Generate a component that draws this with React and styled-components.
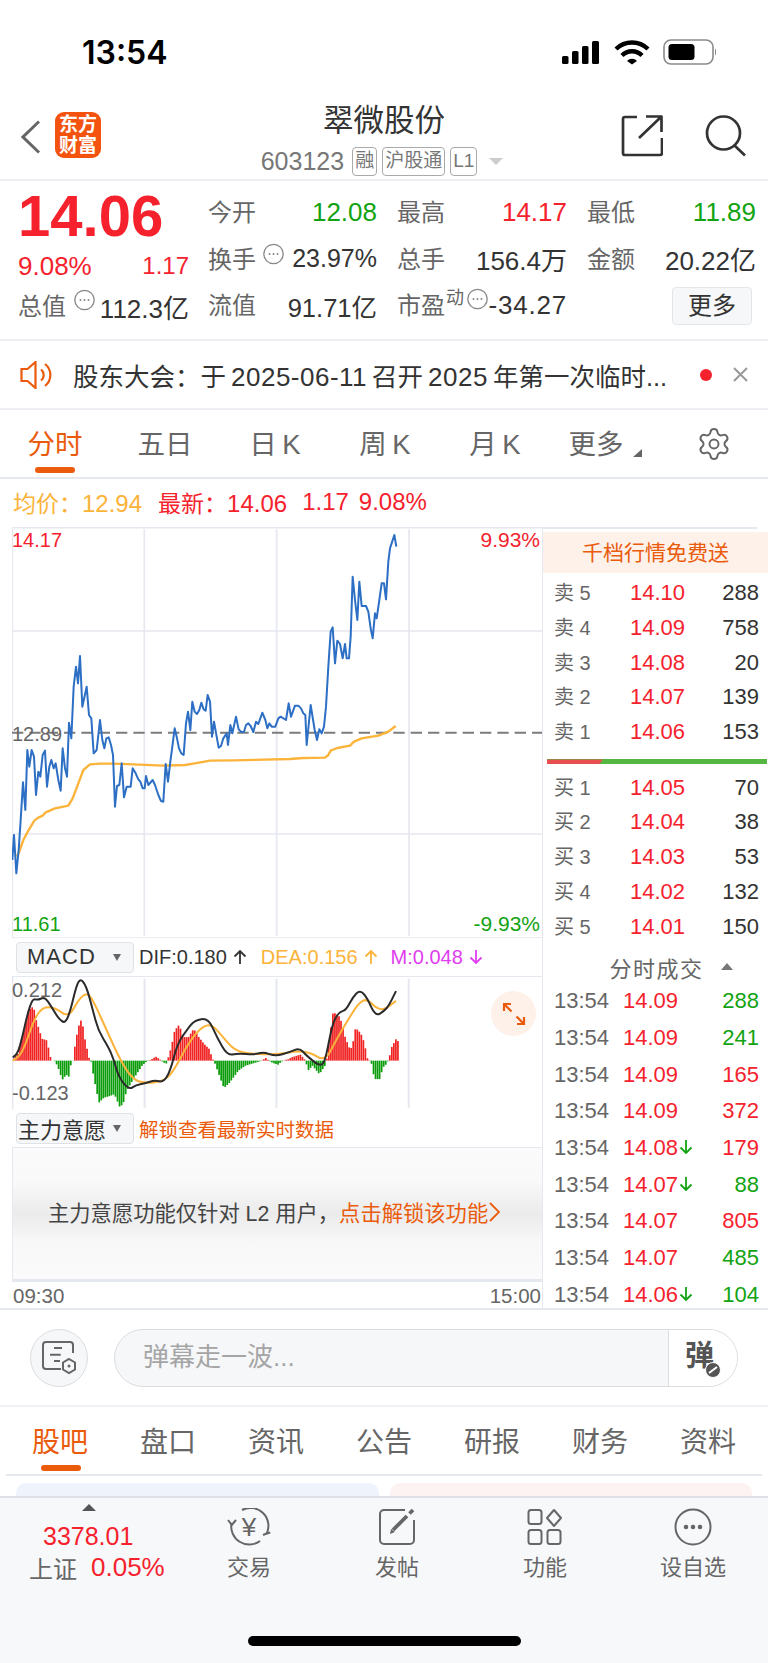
import React from "react";
import styled, { createGlobalStyle } from "styled-components";
import { Settings } from "lucide-react";

const RED = "#f5222d";
const GREEN = "#12a312";
const ORANGE = "#ea5b0c";
const AMBER = "#fbb33a";
const LINE = "#e6e8ef";
const FONT = `"Liberation Sans", "Noto Sans CJK SC", sans-serif`;

const GlobalStyle = createGlobalStyle`
  html, body { margin: 0; padding: 0; background: #fff; }
  body { font-family: ${FONT}; color: #333; }
  * { box-sizing: border-box; }
`;

const Page = styled.div`
  width: 768px;
  height: 1663px;
  overflow: hidden;
  display: flex;
  flex-direction: column;
  background: #fff;
`;

/* status bar */
const StatusBar = styled.div`
  height: 100px;
  flex: none;
  display: flex;
  justify-content: space-between;
  padding: 33px 52px 0 82px;
`;
const Clock = styled.div`
  font-family: Inter, sans-serif;
  font-weight: 600;
  font-size: 32px;
  line-height: 40px;
  color: #000;
`;
const StatusIcons = styled.svg`
  margin-top: 5px;
`;

/* nav */
const Nav = styled.div`
  height: 81px;
  flex: none;
  display: grid;
  grid-template-columns: 1fr auto 1fr;
  border-bottom: 2px solid #eeeff2;
`;
const NavLeft = styled.div`
  display: flex;
  align-items: flex-start;
  padding: 12px 0 0 21px;
  gap: 14px;
`;
const BackIcon = styled.svg`
  margin-top: 8px;
`;
const Logo = styled.div`
  width: 46px;
  height: 46px;
  border-radius: 9px;
  background: #f4530f;
  color: #fff;
  font-weight: 700;
  font-size: 19px;
  line-height: 21px;
  text-align: center;
  padding-top: 2px;
`;
const NavCenter = styled.div`
  display: flex;
  flex-direction: column;
  align-items: center;
`;
const Title = styled.div`
  font-size: 30.5px;
  line-height: 40px;
  color: #333;
`;
const SubRow = styled.div`
  display: flex;
  align-items: center;
  height: 30px;
  margin-top: 6px;
  padding-right: 4px;
  font-size: 25px;
  color: #777;
`;
const Code = styled.span`
  margin-right: 8px;
`;
const Chip = styled.span`
  height: 29px;
  padding: 0 2px;
  margin-right: 5px;
  border: 1px solid #aaa;
  border-radius: 4px;
  font-size: 19px;
  line-height: 26px;
  color: #777;
`;
const Caret = styled.span`
  width: 0;
  height: 0;
  border-left: ${(p) => p.$w}px solid transparent;
  border-right: ${(p) => p.$w}px solid transparent;
  border-${(p) => (p.$up ? "bottom" : "top")}: ${(p) => p.$h}px solid ${(p) => p.$color};
  margin-left: ${(p) => p.$ml || 0}px;
  flex: none;
`;
const NavRight = styled.div`
  display: flex;
  justify-content: flex-end;
  align-items: flex-start;
  padding: 15px 22px 0 0;
  gap: 42px;
`;

/* quote */
const Quote = styled.div`
  height: 160px;
  flex: none;
  display: flex;
  padding: 8px 13px 0 18px;
  border-bottom: 2px solid #eeeff2;
`;
const QuoteLeft = styled.div`
  width: 171px;
  margin-right: 19px;
  flex: none;
  margin-top: -3px;
`;
const BigPrice = styled.div`
  font-size: 58px;
  line-height: 60px;
  font-weight: 700;
  color: ${RED};
`;
const Change = styled.div`
  height: 40px;
  display: flex;
  align-items: center;
  justify-content: space-between;
  color: ${RED};
`;
const ChangeNum = styled.span`
  font-size: ${(p) => p.$size}px;
`;
const StatGrid = styled.div`
  flex: 1;
  display: grid;
  grid-template-columns: 169px 170px 169px;
  grid-auto-rows: 46.5px;
  column-gap: 20px;
  align-items: center;
`;
const Stat = styled.div`
  display: flex;
  justify-content: space-between;
  align-items: center;
  height: 40px;
`;
const Label = styled.span`
  font-size: 24px;
  color: #666;
  display: inline-flex;
  align-items: center;
  margin-top: -3px;
`;
const Value = styled.span`
  font-size: ${(p) => p.$size || 26}px;
  letter-spacing: ${(p) => p.$ls || 0}px;
  color: ${(p) => p.$color || "#333"};
  white-space: nowrap;
`;
const Sup = styled.span`
  font-size: 18px;
  margin: -16px 0 0 1px;
  color: #666;
`;
const DotsSlot = styled.span`
  display: flex;
  margin-left: ${(p) => p.$ml}px;
  margin-top: ${(p) => p.$mt}px;
`;
const MoreBtn = styled.div`
  width: 80px;
  height: 38px;
  margin: 2px 4px 0 auto;
  background: #f6f7f9;
  border: 1px solid #e4e5e9;
  border-radius: 4px;
  font-size: 24px;
  line-height: 35px;
  text-align: center;
  color: #333;
`;

/* notice */
const Notice = styled.div`
  height: 69px;
  flex: none;
  display: flex;
  align-items: center;
  padding: 0 20px;
  border-bottom: 2px solid #eeeff2;
`;
const NoticeText = styled.div`
  font-size: 25.5px;
  color: #333;
  white-space: nowrap;
  width: 627px;
  margin-left: 21px;
`;
const NoticeNum = styled.span`
  font-size: 26px;
  letter-spacing: 0.5px;
  margin: 0 5px;
`;
const RedDot = styled.span`
  width: 12px;
  height: 12px;
  border-radius: 50%;
  background: ${RED};
  margin-right: 21px;
  flex: none;
`;

/* chart tabs */
const ChartTabs = styled.div`
  height: 69px;
  flex: none;
  display: grid;
  grid-template-columns: repeat(6, 110px) 1fr;
  border-bottom: 2px solid ${LINE};
`;
const Tab = styled.div`
  position: relative;
  display: flex;
  justify-content: center;
  align-items: center;
  font-size: 27.5px;
  height: 62px;
  padding-top: 2px;
  color: ${(p) => (p.$active ? ORANGE : "#666")};
  ${(p) =>
    p.$active &&
    `&::after {
      content: "";
      position: absolute;
      left: 35px;
      bottom: -1px;
      width: 40px;
      height: 6px;
      border-radius: 3px;
      background: ${ORANGE};
    }`}
`;
const CornerCaret = styled.span`
  width: 0;
  height: 0;
  border-left: 9px solid transparent;
  border-bottom: 8px solid #666;
  margin: 22px 0 0 9px;
`;
const GearWrap = styled.div`
  display: flex;
  justify-content: flex-end;
  padding: 16px 36px 0 0;
  color: #666;
`;

/* avg row */
const AvgRow = styled.div`
  height: 48px;
  flex: none;
  display: flex;
  align-items: center;
  padding: 0 0 3px 13px;
  font-size: 24px;
`;
const Avg = styled.span`
  color: ${(p) => p.$color};
  margin-right: ${(p) => p.$mr}px;
  white-space: nowrap;
`;
const AvgLabel = styled.span`
  font-size: 23px;
`;

/* middle block */
const Middle = styled.div`
  height: 783px;
  flex: none;
  display: flex;
  border-bottom: 2px solid ${LINE};
`;
const LeftCol = styled.div`
  width: 542px;
  flex: none;
  padding-left: 12px;
  display: flex;
  flex-direction: column;
`;
const ChartBox = styled.div`
  position: relative;
  height: ${(p) => p.$h}px;
  flex: none;
`;
const ChartSvg = styled.svg`
  display: block;
  width: 530px;
  height: 100%;
`;
const AxisLabel = styled.span`
  position: absolute;
  font-size: ${(p) => (p.$right ? 21 : 20)}px;
  line-height: 20px;
  color: ${(p) => p.$color};
  ${(p) => (p.$right ? "right: 2px;" : "left: 0;")}
  top: ${(p) => p.$top}px;
`;
const IndicatorBar = styled.div`
  height: ${(p) => p.$h}px;
  flex: none;
  display: flex;
  align-items: center;
  padding-left: 4px;
  font-size: 20px;
`;
const Select = styled.div`
  width: 118px;
  height: 31px;
  flex: none;
  display: flex;
  align-items: center;
  justify-content: space-between;
  padding: 0 12px 0 ${(p) => p.$pl}px;
  margin-right: 5px;
  background: #f6f7f9;
  border: 1px solid #dfe1e6;
  border-radius: 4px;
  font-size: 22px;
  letter-spacing: ${(p) => p.$ls || 0}px;
  color: #333;
`;
const Indicator = styled.span`
  color: ${(p) => p.$color};
  margin-right: ${(p) => p.$mr}px;
  white-space: nowrap;
  display: inline-flex;
  align-items: center;
  gap: 6px;
`;
const ExpandBtn = styled.div`
  position: absolute;
  left: 479px;
  top: 15px;
  width: 45px;
  height: 45px;
  border-radius: 50%;
  background: #fdf1ea;
  display: flex;
  align-items: center;
  justify-content: center;
`;
const LockHint = styled.span`
  font-size: 19.5px;
  color: ${ORANGE};
`;
const LockPanel = styled.div`
  height: 133px;
  flex: none;
  display: flex;
  align-items: center;
  padding: 0 0 4px 35px;
  font-size: 21.3px;
  white-space: nowrap;
  color: #444;
  border: 1px solid ${LINE};
  border-right: none;
  background: linear-gradient(#fbfbfb 0%, #f9f9f9 25%, #ebebeb 50%, #f8f8f8 72%, #fbfbfb 100%);
`;
const Orange = styled.span`
  color: ${ORANGE};
  display: inline-flex;
  align-items: center;
`;
const LockChevron = styled.svg`
  margin-left: 1px;
`;
const TimeAxis = styled.div`
  flex: 1;
  display: flex;
  justify-content: space-between;
  align-items: center;
  padding: 2px 1px 0 1px;
  border-top: 2px solid ${LINE};
  font-size: 20.5px;
  color: #666;
`;

/* order book */
const RightCol = styled.div`
  position: relative;
  flex: 1;
  border-left: 1px solid ${LINE};
  padding-top: 5px;
  overflow: hidden;
  &::before {
    content: "";
    position: absolute;
    left: 0;
    top: 0;
    width: 214px;
    height: 2px;
    background: ${LINE};
  }
`;
const Banner = styled.div`
  height: 41px;
  background: #fdf1ea;
  color: ${ORANGE};
  font-size: 21px;
  line-height: 41px;
  text-align: center;
  margin-bottom: 3px;
`;
const BookRow = styled.div`
  display: grid;
  grid-template-columns: 61px 70px 74px;
  height: ${(p) => p.$h}px;
  padding-left: 11px;
  align-items: center;
  font-size: 22px;
`;
const BookLabel = styled.span`
  color: #666;
  font-size: 20px;
  white-space: nowrap;
  margin-top: -3px;
`;
const TradeTime = styled.span`
  color: #666;
  font-size: 22px;
  white-space: nowrap;
`;
const Num = styled.span`
  text-align: right;
  color: ${(p) => p.$color};
  margin-right: ${(p) => p.$mr || 0}px;
  position: relative;
`;
const RatioBar = styled.div`
  height: 5px;
  margin: 10px 1px 6px 4px;
  background: #55b742;
`;
const RatioRed = styled.div`
  width: 56px;
  height: 100%;
  background: #e8504f;
  clip-path: polygon(0 0, 100% 0, calc(100% - 4px) 100%, 0 100%);
`;
const TradesHead = styled.div`
  display: flex;
  justify-content: center;
  align-items: center;
  height: 28px;
  margin-top: 9px;
  padding-left: 31px;
  font-size: 22px;
  letter-spacing: 1.5px;
  color: #666;
  white-space: nowrap;
`;
const TradeArrow = styled.svg`
  position: absolute;
  left: 100%;
  top: 4px;
  margin-left: 1px;
`;
const TradeList = styled.div`
  margin-top: 2px;
`;

/* barrage */
const Barrage = styled.div`
  height: 97px;
  flex: none;
  display: flex;
  align-items: center;
  padding-left: 30px;
  border-bottom: 2px solid #f0f1f4;
`;
const RoundBtn = styled.div`
  width: 58px;
  height: 58px;
  border-radius: 50%;
  background: #f6f7f9;
  border: 1px solid #dcdde1;
  display: flex;
  align-items: center;
  justify-content: center;
  margin-right: 26px;
`;
const InputBox = styled.div`
  width: 624px;
  height: 58px;
  border-radius: 29px;
  border: 1px solid #dcdde1;
  background: #f6f7f9;
  display: flex;
  overflow: hidden;
`;
const Placeholder = styled.div`
  flex: 1;
  padding-left: 28px;
  font-size: 26px;
  line-height: 54px;
  color: #a5a5a5;
`;
const SendBtn = styled.div`
  position: relative;
  width: 69px;
  background: #fff;
  border-left: 1px solid #dcdde1;
  font-size: 29px;
  font-weight: 700;
  line-height: 52px;
  padding-left: 16px;
  color: #555;
`;
const SendBadge = styled.svg`
  position: absolute;
  left: 36px;
  top: 32px;
`;

/* section tabs */
const SectionTabs = styled.div`
  height: 69px;
  flex: none;
  margin: 0 6px;
  display: grid;
  grid-template-columns: repeat(7, 108px);
  border-bottom: 2px solid ${LINE};
`;
const SectionTab = styled(Tab)`
  font-size: 28px;
  padding-top: 3px;
  ${(p) => p.$active && `&::after { left: 35px; bottom: -2px; }`}
`;
const CardRow = styled.div`
  height: 20px;
  flex: none;
  display: flex;
  gap: 11px;
  padding: 7px 16px 0;
`;
const Card = styled.div`
  flex: 1;
  background: ${(p) => p.$bg};
  border-radius: 10px 10px 0 0;
`;

/* bottom bar */
const BottomBar = styled.div`
  flex: 1;
  position: relative;
  background: #f7f8fa;
  border-top: 2px solid #dfe1e7;
  display: grid;
  grid-template-columns: 175px repeat(4, 148px);
  grid-template-rows: 138px;
`;
const IndexBox = styled.div`
  display: flex;
  flex-direction: column;
  padding-top: 6px;
`;
const IndexValue = styled.div`
  margin: 10px 0 0 43px;
  font-size: 25px;
  line-height: 30px;
  color: ${RED};
`;
const IndexRow = styled.div`
  display: flex;
  align-items: center;
  gap: 14px;
  margin: -1px 0 0 29px;
  font-size: 24px;
  color: #666;
`;
const IndexPct = styled.span`
  color: ${RED};
  font-size: 26px;
`;
const BarItem = styled.div`
  display: flex;
  flex-direction: column;
  align-items: center;
  padding-top: 10px;
  font-size: 22px;
  color: #666;
`;
const BarLabel = styled.span`
  margin-top: 7px;
  line-height: 30px;
`;
const HomeIndicator = styled.div`
  position: absolute;
  left: 248px;
  bottom: 17px;
  width: 273px;
  height: 10px;
  border-radius: 5px;
  background: #000;
`;

/* drawing data, in reference crop units */
const BLUE = [[37,1020],[42,945],[49,1060],[56,990],[62,900],[69,787],[76,870],[82,690],[88,740],[95,690],[102,710],[108,825],[115,755],[121,770],[128,705],[135,692],[141,800],[148,740],[154,720],[161,745],[167,730],[175,780],[182,812],[188,685],[195,745],[201,770],[207,608],[214,655],[221,500],[228,440],[234,490],[240,408],[247,560],[260,500],[267,585],[274,595],[281,700],[290,690],[300,600],[307,660],[313,685],[319,655],[326,652],[333,675],[339,705],[345,860],[351,798],[358,795],[365,730],[372,832],[380,800],[392,800],[398,745],[407,760],[415,778],[421,785],[428,805],[434,805],[438,768],[445,795],[458,780],[465,795],[475,825],[483,843],[490,845],[497,732],[504,785],[511,725],[517,680],[524,625],[530,650],[537,685],[544,700],[551,705],[558,610],[564,575],[571,630],[577,545],[584,575],[591,582],[598,570],[604,548],[611,568],[617,572],[623,525],[630,545],[636,650],[642,605],[650,650],[656,683],[663,678],[670,655],[680,640],[684,675],[691,615],[697,640],[708,590],[716,628],[724,636],[732,635],[738,615],[745,610],[752,618],[760,636],[768,605],[775,612],[787,578],[796,600],[802,625],[808,610],[815,620],[826,620],[835,595],[842,590],[858,600],[866,550],[873,590],[885,557],[895,557],[903,565],[910,580],[916,585],[920,675],[932,555],[944,630],[951,660],[958,628],[965,640],[972,620],[978,560],[985,440],[992,335],[998,322],[1005,430],[1012,362],[1020,372],[1028,415],[1035,372],[1040,415],[1047,415],[1052,350],[1058,170],[1065,240],[1072,300],[1078,185],[1085,258],[1098,258],[1105,275],[1112,325],[1118,355],[1125,280],[1130,295],[1138,240],[1145,190],[1152,190],[1158,238],[1165,125],[1170,85],[1183,45],[1189,80]];
const AVG = [[50,1010],[56,1000],[70,960],[85,932],[103,902],[115,893],[128,887],[137,877],[165,865],[205,857],[218,835],[235,790],[250,750],[270,733],[300,731],[340,731],[400,733],[490,737],[555,735],[580,731],[630,722],[700,721],[870,717],[910,714],[975,713],[985,705],[992,692],[1012,684],[1050,677],[1062,665],[1085,655],[1135,647],[1165,635],[1187,618]];
const HIST = [[37,385],[50,370],[60,330],[70,290],[80,240],[95,228],[103,270],[112,300],[120,325],[135,330],[142,375],[150,390],[158,392],[170,420],[178,448],[190,432],[198,438],[205,392],[210,390],[216,340],[225,290],[235,265],[245,330],[257,385],[262,392],[270,440],[285,515],[300,500],[318,495],[330,490],[345,527],[355,520],[365,480],[385,445],[410,405],[424,392],[430,390],[440,385],[450,378],[460,385],[468,392],[480,400],[485,385],[495,350],[505,300],[518,283],[530,320],[545,320],[560,295],[575,320],[590,340],[605,355],[615,385],[620,393],[640,450],[648,472],[665,455],[690,420],[710,405],[750,393],[760,388],[770,382],[778,390],[790,397],[805,402],[815,393],[825,388],[835,386],[845,380],[870,372],[885,390],[892,420],[905,405],[925,430],[945,400],[950,350],[965,245],[985,260],[1000,320],[1012,352],[1020,352],[1030,292],[1045,308],[1055,335],[1065,385],[1075,392],[1085,445],[1100,445],[1110,410],[1120,400],[1127,385],[1135,350],[1148,325],[1158,338]];
const DIF = [[37,380],[50,375],[65,320],[80,250],[95,205],[110,210],[130,200],[150,230],[170,265],[190,280],[205,240],[220,175],[232,145],[250,165],[270,240],[285,300],[315,350],[330,385],[345,440],[375,477],[395,462],[420,458],[450,448],[475,455],[495,420],[515,340],[545,295],[565,270],[605,263],[630,320],[660,375],[690,368],[740,372],[765,364],[800,377],[840,365],[870,352],[890,375],[930,408],[945,390],[965,280],[985,245],[1005,240],[1025,200],[1045,180],[1065,200],[1090,258],[1115,243],[1130,225],[1150,183]];
const DEA = [[37,390],[55,382],[75,340],[100,265],[125,230],[160,232],[200,262],[230,205],[255,187],[275,220],[310,300],[350,390],[385,445],[420,458],[475,452],[505,420],[540,350],[575,300],[610,278],[640,310],[680,360],[730,370],[800,372],[860,362],[900,365],[945,392],[975,330],[1010,270],[1040,220],[1065,205],[1090,232],[1115,240],[1150,212]];

const toPoints = (pts) => pts.map((p) => p.join(",")).join(" ");

// rounds the macd lines through the midpoints of the sampled points
const smooth = (pts) => {
  let d = `M${pts[0][0]} ${pts[0][1]}`;
  for (let i = 1; i < pts.length - 1; i++) {
    const mx = (pts[i][0] + pts[i + 1][0]) / 2;
    const my = (pts[i][1] + pts[i + 1][1]) / 2;
    d += `Q${pts[i][0]} ${pts[i][1]} ${mx} ${my}`;
  }
  const last = pts[pts.length - 1];
  return `${d}L${last[0]} ${last[1]}`;
};

const histAt = (x) => {
  for (let i = 1; i < HIST.length; i++) {
    if (x <= HIST[i][0]) {
      const [x0, y0] = HIST[i - 1];
      const [x1, y1] = HIST[i];
      return y0 + ((y1 - y0) * (x - x0)) / (x1 - x0);
    }
  }
  return 390;
};

const histBars = [];
for (let x = 38; x < 1158; x += 5.9) histBars.push([x, histAt(x)]);

const PriceChart = () => (
  <ChartSvg viewBox="36 21 1590 1233" preserveAspectRatio="none">
    <g stroke={LINE} strokeWidth="5" fill="none">
      <path d="M36 23H1626M36 1254H1626M37 21V1254" />
      <path d="M36 333H1626M36 942H1626" />
      <path d="M433 28V1248M830 28V1248M1227 28V1248" />
    </g>
    <path d="M36 638H1626" stroke="#7c7c7c" strokeWidth="6" strokeDasharray="34 18" fill="none" />
    <polyline points={toPoints(AVG)} fill="none" stroke="#fbb33a" strokeWidth="7" strokeLinejoin="round" />
    <polyline points={toPoints(BLUE)} fill="none" stroke="#2c6fc4" strokeWidth="6" strokeLinejoin="round" />
  </ChartSvg>
);

const MacdChart = () => (
  <ChartSvg viewBox="35 138 1539 396" preserveAspectRatio="none">
    <g stroke={LINE} fill="none">
      <path d="M35 139H1574M37 138V534" strokeWidth="1.5" vectorEffect="non-scaling-stroke" />
      <path d="M420 146V530M803 146V530M1187 146V530" strokeWidth="2" vectorEffect="non-scaling-stroke" />
    </g>
    {histBars.map(([x, y], i) => (
      <rect
        key={i}
        x={x}
        y={Math.min(y, 390)}
        width="5"
        height={Math.abs(y - 390)}
        fill={y < 390 ? "#f02222" : "#0b9c0b"}
      />
    ))}
    <path d={smooth(DEA)} fill="none" stroke="#fbb33a" strokeWidth="2" vectorEffect="non-scaling-stroke" />
    <path d={smooth(DIF)} fill="none" stroke="#2b2b2b" strokeWidth="2" vectorEffect="non-scaling-stroke" />
  </ChartSvg>
);

const DotsCircle = () => (
  <svg width="21" height="22" viewBox="0 0 21 22" fill="none">
    <circle cx="10.5" cy="11" r="9.7" stroke="#888" strokeWidth="1.3" />
    <circle cx="6.5" cy="11" r="1" fill="#888" />
    <circle cx="10.5" cy="11" r="1" fill="#888" />
    <circle cx="14.5" cy="11" r="1" fill="#888" />
  </svg>
);

const Arrow = ({ color, up }) => (
  <svg width="14" height="16" viewBox="0 0 14 16" fill="none" stroke={color} strokeWidth="1.8">
    {up ? <path d="M7 15V2M1.5 7.5 7 2l5.5 5.5" /> : <path d="M7 1v13M1.5 8.5 7 14l5.5-5.5" />}
  </svg>
);

const ASK = [["5", "14.10", "288"], ["4", "14.09", "758"], ["3", "14.08", "20"], ["2", "14.07", "139"], ["1", "14.06", "153"]];
const BID = [["1", "14.05", "70"], ["2", "14.04", "38"], ["3", "14.03", "53"], ["4", "14.02", "132"], ["5", "14.01", "150"]];
const TRADES = [
  ["14.09", "288", GREEN, false],
  ["14.09", "241", GREEN, false],
  ["14.09", "165", RED, false],
  ["14.09", "372", RED, false],
  ["14.08", "179", RED, true],
  ["14.07", "88", GREEN, true],
  ["14.07", "805", RED, false],
  ["14.07", "485", GREEN, false],
  ["14.06", "104", GREEN, true],
];

const App = () => (
  <>
    <GlobalStyle />
    <Page>
      <StatusBar>
        <Clock>13:54</Clock>
        <StatusIcons width="154" height="28" viewBox="562 37 154 28">
          <rect x="562" y="55" width="6.5" height="8" rx="1.5" />
          <rect x="572" y="50" width="6.5" height="13" rx="1.5" />
          <rect x="582" y="45" width="6.5" height="18" rx="1.5" />
          <rect x="592" y="40" width="7" height="23" rx="1.5" />
          <path d="M616 48a23 23 0 0 1 32 0" fill="none" stroke="#000" strokeWidth="4.4" />
          <path d="M622 54.5a14 14 0 0 1 20 0" fill="none" stroke="#000" strokeWidth="4.4" />
          <path d="M627 60a6.5 6.5 0 0 1 10 0l-5 3.5z" />
          <rect x="664" y="39" width="49" height="24" rx="7" fill="none" stroke="#8a8a8e" strokeWidth="1.6" />
          <rect x="668.5" y="43" width="26" height="16" rx="3.5" />
          <path d="M715 47.5c1.5.5 1.5 6.5 0 7z" fill="#8a8a8e" />
        </StatusIcons>
      </StatusBar>

      <Nav>
        <NavLeft>
          <BackIcon width="20" height="34" viewBox="0 0 20 34" fill="none">
            <path d="M18 1.5 2 17l16 15.5" stroke="#666" strokeWidth="3" />
          </BackIcon>
          <Logo>东方<br />财富</Logo>
        </NavLeft>
        <NavCenter>
          <Title>翠微股份</Title>
          <SubRow>
            <Code>603123</Code>
            <Chip>融</Chip>
            <Chip>沪股通</Chip>
            <Chip>L1</Chip>
            <Caret $w={7} $h={7} $color="#ccc" $ml={7} />
          </SubRow>
        </NavCenter>
        <NavRight>
          <svg width="42" height="42" viewBox="0 0 42 42" fill="none" stroke="#333" strokeWidth="2.7" strokeLinejoin="round">
            <path d="M16 2H4a2 2 0 0 0-2 2v34a2 2 0 0 0 2 2h35a2 2 0 0 0 2-2V23" />
            <path d="M18 23 41 1M25 1.5h15.5V17" />
          </svg>
          <svg width="41" height="42" viewBox="0 0 41 42" fill="none" stroke="#333" strokeWidth="2.7">
            <circle cx="18.5" cy="18" r="16.5" />
            <path d="M29 30l11 10.5" />
          </svg>
        </NavRight>
      </Nav>

      <Quote>
        <QuoteLeft>
          <BigPrice>14.06</BigPrice>
          <Change>
            <ChangeNum $size={26}>9.08%</ChangeNum>
            <ChangeNum $size={24}>1.17</ChangeNum>
          </Change>
          <Stat>
            <Label>总值<DotsSlot $ml={8} $mt={-9}><DotsCircle /></DotsSlot></Label>
            <Value>112.3亿</Value>
          </Stat>
        </QuoteLeft>
        <StatGrid>
          <Stat><Label>今开</Label><Value $color={GREEN}>12.08</Value></Stat>
          <Stat><Label>最高</Label><Value $color={RED}>14.17</Value></Stat>
          <Stat><Label>最低</Label><Value $color={GREEN}>11.89</Value></Stat>
          <Stat>
            <Label>换手<DotsSlot $ml={7} $mt={-7}><DotsCircle /></DotsSlot></Label>
            <Value $size={25}>23.97%</Value>
          </Stat>
          <Stat><Label>总手</Label><Value>156.4万</Value></Stat>
          <Stat><Label>金额</Label><Value>20.22亿</Value></Stat>
          <Stat><Label>流值</Label><Value $size={25.5}>91.71亿</Value></Stat>
          <Stat>
            <Label>市盈<Sup>动</Sup><DotsSlot $ml={3} $mt={-9}><DotsCircle /></DotsSlot></Label>
            <Value $ls={0.8}>-34.27</Value>
          </Stat>
          <MoreBtn>更多</MoreBtn>
        </StatGrid>
      </Quote>

      <Notice>
        <svg width="32" height="28" viewBox="0 0 32 28" fill="none" stroke={ORANGE} strokeWidth="2.2">
          <path d="M1.5 8h6L15.5 1v26l-8-7h-6z" />
          <path d="M21 8.5a7 7 0 0 1 0 11M25 3a14 14 0 0 1 0 22" />
        </svg>
        <NoticeText>股东大会：于<NoticeNum>2025-06-11</NoticeNum>召开<NoticeNum>2025</NoticeNum>年第一次临时...</NoticeText>
        <RedDot />
        <svg width="15" height="15" viewBox="0 0 15 15" stroke="#999" strokeWidth="2">
          <path d="m1 1 13 13M14 1 1 14" />
        </svg>
      </Notice>

      <ChartTabs>
        <Tab $active>分时</Tab>
        <Tab>五日</Tab>
        <Tab>日&thinsp;K</Tab>
        <Tab>周&thinsp;K</Tab>
        <Tab>月&thinsp;K</Tab>
        <Tab>更多<CornerCaret /></Tab>
        <GearWrap><Settings size={36} strokeWidth={1.3} /></GearWrap>
      </ChartTabs>

      <AvgRow>
        <Avg $color={AMBER} $mr={16}><AvgLabel>均价：</AvgLabel>12.94</Avg>
        <Avg $color={RED} $mr={15}><AvgLabel>最新：</AvgLabel>14.06</Avg>
        <Avg $color={RED} $mr={10}>1.17</Avg>
        <Avg $color={RED} $mr={0}>9.08%</Avg>
      </AvgRow>

      <Middle>
        <LeftCol>
          <ChartBox $h={411}>
            <PriceChart />
            <AxisLabel $color={RED} $top={3}>14.17</AxisLabel>
            <AxisLabel $color="#666" $top={197}>12.89</AxisLabel>
            <AxisLabel $color={GREEN} $top={387}>11.61</AxisLabel>
            <AxisLabel $right $color={RED} $top={3}>9.93%</AxisLabel>
            <AxisLabel $right $color={GREEN} $top={387}>-9.93%</AxisLabel>
          </ChartBox>
          <IndicatorBar $h={38}>
            <Select $pl={10} $ls={1}>
              MACD
              <Caret $w={4} $h={7} $color="#666" />
            </Select>
            <Indicator $color="#333" $mr={14}>DIF:0.180 <Arrow color="#333" up /></Indicator>
            <Indicator $color={AMBER} $mr={13}>DEA:0.156 <Arrow color={AMBER} up /></Indicator>
            <Indicator $color="#e03df0" $mr={0}>M:0.048 <Arrow color="#e03df0" /></Indicator>
          </IndicatorBar>
          <ChartBox $h={133}>
            <MacdChart />
            <AxisLabel $color="#666" $top={4}>0.212</AxisLabel>
            <AxisLabel $color="#666" $top={107}>-0.123</AxisLabel>
            <ExpandBtn>
              <svg width="24" height="24" viewBox="0 0 24 24" fill="none" stroke={ORANGE} strokeWidth="2.2">
                <path d="M2 9V2h7M2 2l7.5 7.5M22 15v7h-7M22 22l-7.5-7.5" />
              </svg>
            </ExpandBtn>
          </ChartBox>
          <IndicatorBar $h={38}>
            <Select $pl={1}>
              主力意愿
              <Caret $w={4} $h={7} $color="#666" />
            </Select>
            <LockHint>解锁查看最新实时数据</LockHint>
          </IndicatorBar>
          <LockPanel>
            主力意愿功能仅针对 L2 用户，
            <Orange>
              点击解锁该功能
              <LockChevron width="11" height="20" viewBox="0 0 11 20" fill="none" stroke={ORANGE} strokeWidth="1.8">
                <path d="m1 1 9 9-9 9" />
              </LockChevron>
            </Orange>
          </LockPanel>
          <TimeAxis>
            <span>09:30</span>
            <span>15:00</span>
          </TimeAxis>
        </LeftCol>

        <RightCol>
          <Banner>千档行情免费送</Banner>
          {ASK.map(([n, p, q]) => (
            <BookRow key={n} $h={34.7}>
              <BookLabel>卖 {n}</BookLabel>
              <Num $color={RED}>{p}</Num>
              <Num $color="#333">{q}</Num>
            </BookRow>
          ))}
          <RatioBar><RatioRed /></RatioBar>
          {BID.map(([n, p, q]) => (
            <BookRow key={n} $h={34.7}>
              <BookLabel>买 {n}</BookLabel>
              <Num $color={RED}>{p}</Num>
              <Num $color="#333">{q}</Num>
            </BookRow>
          ))}
          <TradesHead>
            分时成交
            <Caret $up $w={6} $h={7} $color="#777" $ml={17} />
          </TradesHead>
          <TradeList>
            {TRADES.map(([p, q, c, down], i) => (
              <BookRow key={i} $h={36.7}>
                <TradeTime>13:54</TradeTime>
                <Num $color={RED} $mr={7}>
                  {p}
                  {down && (
                    <TradeArrow width="14" height="16" viewBox="0 0 14 16" fill="none" stroke={GREEN} strokeWidth="1.8">
                      <path d="M7 1v13M1.5 8.5 7 14l5.5-5.5" />
                    </TradeArrow>
                  )}
                </Num>
                <Num $color={c}>{q}</Num>
              </BookRow>
            ))}
          </TradeList>
        </RightCol>
      </Middle>

      <Barrage>
        <RoundBtn>
          <svg width="36" height="36" viewBox="0 0 36 36" fill="none" stroke="#666" strokeWidth="2">
            <path d="M32 13V5a3 3 0 0 0-3-3H5a3 3 0 0 0-3 3v21a3 3 0 0 0 3 3h15" />
            <path d="M13 8h8M9 14.7h10.7M13 21h6" />
            <path d="m28 19 6 3.5v7L28 33l-6-3.5v-7z" />
            <circle cx="28" cy="26" r="1.5" fill="#666" stroke="none" />
          </svg>
        </RoundBtn>
        <InputBox>
          <Placeholder>弹幕走一波...</Placeholder>
          <SendBtn>
            弹
            <SendBadge width="16" height="16" viewBox="0 0 16 16">
              <circle cx="8" cy="8" r="7.5" fill="#555" stroke="#fff" strokeWidth="1" />
              <path d="m4 11 8-6" stroke="#fff" strokeWidth="2" />
            </SendBadge>
          </SendBtn>
        </InputBox>
      </Barrage>

      <SectionTabs>
        {["股吧", "盘口", "资讯", "公告", "研报", "财务", "资料"].map((t, i) => (
          <SectionTab key={t} $active={i === 0}>{t}</SectionTab>
        ))}
      </SectionTabs>
      <CardRow>
        <Card $bg="#eff3fc" />
        <Card $bg="#fef3f3" />
      </CardRow>

      <BottomBar>
        <IndexBox>
          <Caret $up $w={7} $h={7} $color="#555" $ml={82} />
          <IndexValue>3378.01</IndexValue>
          <IndexRow>
            <span>上证</span>
            <IndexPct>0.05%</IndexPct>
          </IndexRow>
        </IndexBox>
        <BarItem>
          <svg width="44" height="38" viewBox="0 0 44 38" fill="none" stroke="#666" strokeWidth="2">
            <path d="M33 33A18 18 0 0 1 4.6 15" />
            <path d="M15 2a18 18 0 0 1 24.5 24" />
            <path d="M1 12l3.8 5L9 12M36 27l3.8-1.5 3.5-1" />
            <text x="22" y="28" textAnchor="middle" fontSize="26" fill="#666" stroke="none" fontFamily="Liberation Sans">¥</text>
          </svg>
          <BarLabel>交易</BarLabel>
        </BarItem>
        <BarItem>
          <svg width="38" height="38" viewBox="0 0 38 38" fill="none" stroke="#666" strokeWidth="2">
            <path d="M27 2H6a4 4 0 0 0-4 4v26a4 4 0 0 0 4 4h26a4 4 0 0 0 4-4V12" />
            <path d="M15 22 29 8" strokeWidth="3.8" />
            <path d="M31.5 5.5 35 2" strokeWidth="3.8" />
            <path d="m12 26 1-5 4 3z" fill="#666" stroke="none" />
          </svg>
          <BarLabel>发帖</BarLabel>
        </BarItem>
        <BarItem>
          <svg width="36" height="38" viewBox="0 0 36 38" fill="none" stroke="#666" strokeWidth="2">
            <rect x="1.5" y="2" width="13" height="14" rx="2.5" />
            <rect x="1.5" y="22" width="13" height="14" rx="2.5" />
            <rect x="20.5" y="22" width="13" height="14" rx="2.5" />
            <path d="m27 2 7 8-7 8-7-8z" strokeLinejoin="round" />
          </svg>
          <BarLabel>功能</BarLabel>
        </BarItem>
        <BarItem>
          <svg width="38" height="38" viewBox="0 0 38 38" fill="none" stroke="#666" strokeWidth="2">
            <circle cx="19" cy="19" r="17.5" />
            <circle cx="12" cy="19" r="1.3" fill="#666" />
            <circle cx="19" cy="19" r="1.3" fill="#666" />
            <circle cx="26" cy="19" r="1.3" fill="#666" />
          </svg>
          <BarLabel>设自选</BarLabel>
        </BarItem>
        <HomeIndicator />
      </BottomBar>
    </Page>
  </>
);

export default App;
